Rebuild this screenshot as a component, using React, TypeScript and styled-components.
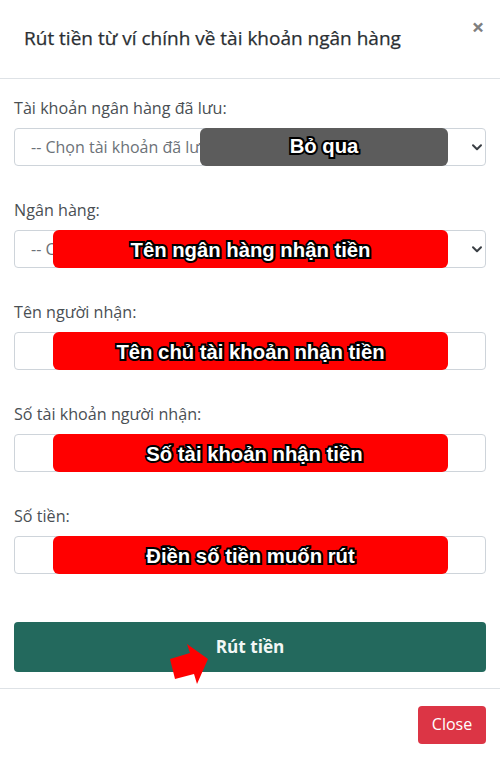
import React from "react";
import styled, { createGlobalStyle } from "styled-components";

const Global = createGlobalStyle`
  html, body { margin: 0; padding: 0; background: #fff; }
  body { font-family: "Open Sans", "Noto Sans", sans-serif; color: #212529; }
  * { box-sizing: border-box; }
`;

const Modal = styled.div`
  width: 500px;
  height: 758px;
  display: flex;
  flex-direction: column;
  background: #fff;
  overflow: hidden;
`;

const Header = styled.header`
  position: relative;
  height: 79px;
  padding: 25px 24px 0;
  border-bottom: 1px solid #dee2e6;
`;

const Title = styled.h5`
  margin: 0;
  font-size: 19px;
  line-height: 26px;
  font-weight: 500;
  color: #2b2f33;
  -webkit-text-stroke: 0.25px #2b2f33;
`;

const CloseX = styled.button`
  position: absolute;
  top: 13px;
  right: 14px;
  width: 16px;
  height: 26px;
  padding: 0;
  border: 0;
  background: none;
  color: #7f7f7f;
  font-family: "Open Sans", sans-serif;
  font-size: 22px;
  line-height: 26px;
  font-weight: 700;
`;

const Body = styled.div`
  height: 610px;
  padding: 18px 14px 0;
  border-bottom: 1px solid #dee2e6;
`;

const Field = styled.div`
  height: 102px;
`;

const Label = styled.label`
  display: block;
  height: 31px;
  font-size: 16.15px;
  line-height: 22px;
  color: #4a4f54;
`;

const Control = styled.div`
  position: relative;
  height: 38px;
`;

const Select = styled.select`
  display: block;
  width: 100%;
  height: 38px;
  padding: 0 32px 0 16px;
  appearance: none;
  border: 1px solid #ced4da;
  border-radius: 4px;
  background: #fff;
  font-family: inherit;
  font-size: 16px;
  color: #6c7278;
`;

const Input = styled.input`
  display: block;
  width: 100%;
  height: 38px;
  border: 1px solid #ced4da;
  border-radius: 4px;
  background: #fff;
`;

const Chevron = styled.svg`
  position: absolute;
  top: 13px;
  right: 3px;
  width: 12px;
  height: 12px;
  fill: none;
  stroke: #3a3f44;
  stroke-width: 2;
  stroke-linecap: round;
  stroke-linejoin: round;
`;

const Note = styled.div<{ $left: number; $grey?: boolean; $inset?: number }>`
  position: absolute;
  top: 0;
  left: ${(p) => p.$left}px;
  width: ${(p) => 434 - p.$left}px;
  height: 38px;
  padding: ${(p) => (p.$grey ? "0 0 3px" : "2px 0 0")};
  padding-left: ${(p) => p.$inset ?? 0}px;
  display: flex;
  align-items: center;
  justify-content: center;
  border-radius: 6px;
  background: ${(p) => (p.$grey ? "#5c5c5c" : "#ff0000")};
`;

const NoteText = styled.span`
  font-family: "Liberation Sans", Arial, sans-serif;
  font-size: 20.3px;
  line-height: 24px;
  font-weight: 700;
  color: #fff;
  -webkit-text-stroke: 4px #000;
  paint-order: stroke fill;
`;

const Submit = styled.button`
  position: relative;
  display: block;
  width: 100%;
  height: 50px;
  margin-top: 15px;
  padding: 0;
  border: 0;
  border-radius: 4px;
  background: #23695d;
  color: #f2f7f5;
  font-family: inherit;
  font-size: 17.2px;
  font-weight: 700;
  line-height: 50px;
`;

const Arrow = styled.svg`
  position: absolute;
  left: 156px;
  top: 20px;
  width: 40px;
  height: 42px;
  fill: #ff0000;
`;

const Footer = styled.footer`
  display: flex;
  justify-content: flex-end;
  padding: 17px 14px 0;
`;

const CloseButton = styled.button`
  width: 68px;
  height: 38px;
  padding: 0 0 2px;
  border: 0;
  border-radius: 4px;
  background: #dc3545;
  color: #fff;
  font-family: inherit;
  font-size: 16px;
`;

const ChevronIcon = () => (
  <Chevron viewBox="0 0 12 12">
    <path d="M2 4.2 6 8.2 10 4.2" />
  </Chevron>
);

const fields = [
  { label: "Tài khoản ngân hàng đã lưu:", kind: "select", option: "-- Chọn tài khoản đã lưu --", note: "Bỏ qua", left: 186, grey: true },
  { label: "Ngân hàng:", kind: "select", option: "-- Chọn ngân hàng --", note: "Tên ngân hàng nhận tiền", left: 39 },
  { label: "Tên người nhận:", kind: "input", note: "Tên chủ tài khoản nhận tiền", left: 39 },
  { label: "Số tài khoản người nhận:", kind: "input", note: "Số tài khoản nhận tiền", left: 39, inset: 8 },
  { label: "Số tiền:", kind: "input", note: "Điền số tiền muốn rút", left: 39 },
];

export default function App() {
  return (
    <Modal>
      <Global />
      <Header>
        <Title>Rút tiền từ ví chính về tài khoản ngân hàng</Title>
        <CloseX aria-label="Close">×</CloseX>
      </Header>
      <Body>
        {fields.map((f) => (
          <Field key={f.label}>
            <Label>{f.label}</Label>
            <Control>
              {f.kind === "select" ? (
                <>
                  <Select>
                    <option>{f.option}</option>
                  </Select>
                  <ChevronIcon />
                </>
              ) : (
                <Input />
              )}
              <Note $left={f.left} $grey={f.grey} $inset={f.inset}>
                <NoteText>{f.note}</NoteText>
              </Note>
            </Control>
          </Field>
        ))}
        <Submit>
          Rút tiền
          <Arrow viewBox="0 0 40 42">
            <polygon points="0,17 20,11 17,2 38,17 27,42 24,32 5,37" />
          </Arrow>
        </Submit>
      </Body>
      <Footer>
        <CloseButton>Close</CloseButton>
      </Footer>
    </Modal>
  );
}
